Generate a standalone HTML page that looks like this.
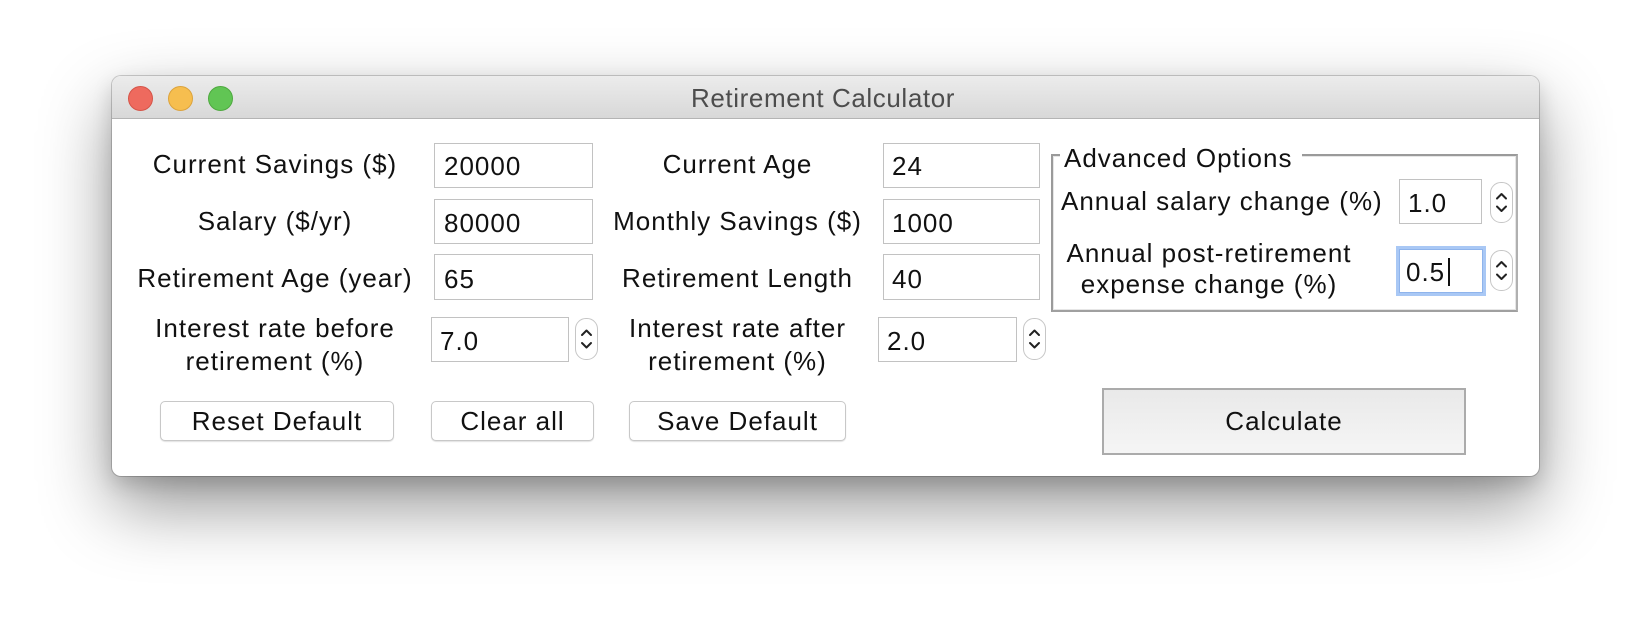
<!DOCTYPE html>
<html><head><meta charset="utf-8"><style>
*{margin:0;padding:0;box-sizing:border-box}
html,body{width:1650px;height:624px;overflow:hidden;background:#fff;font-family:"Liberation Sans",Arial,sans-serif}
.win{position:absolute;left:112px;top:76px;width:1427px;height:400px;background:#fff;border-radius:9px;box-shadow:0 0 0 1px rgba(0,0,0,0.18),0 30px 70px rgba(0,0,0,0.42),0 8px 20px rgba(0,0,0,0.15);overflow:hidden}
.tb{position:absolute;left:0;top:0;width:100%;height:43px;background:linear-gradient(#ececec,#d8d8d8);border-bottom:1px solid #b4b4b4}
.dot{position:absolute;top:10px;width:25px;height:25px;border-radius:50%}
.t{position:absolute;font-size:26px;line-height:23px;letter-spacing:1px;color:#111;white-space:nowrap}
.c{text-align:center}
.e{position:absolute;border:1px solid #c2c2c2;background:#fff}
.sp{position:absolute;width:23px;height:42px;border:1px solid #c6c6c6;border-radius:11px;background:#fff}
.btn{position:absolute;border:1px solid #c8c8c8;border-radius:5px;background:#fff;box-shadow:0 1px 1px rgba(0,0,0,0.12)}
</style></head><body>
<div class="win">
 <div class="tb">
  <div class="dot" style="left:16px;background:#ee6a5e;border:1px solid #d55448"></div>
  <div class="dot" style="left:56px;background:#f6be4f;border:1px solid #dca33c"></div>
  <div class="dot" style="left:96px;background:#61c554;border:1px solid #4ea93f"></div>
  <div class="t c" style="left:0;width:1422px;top:11px;color:#4d4d4d;letter-spacing:0.6px">Retirement Calculator</div>
 </div>
</div>
<div style="position:absolute;left:0;top:0;width:1650px;height:624px">
<div class="t c" style="left:125px;width:300px;top:153px">Current Savings ($)</div>
<div class="t c" style="left:125px;width:300px;top:210px">Salary ($/yr)</div>
<div class="t c" style="left:125px;width:300px;top:267px">Retirement Age (year)</div>
<div class="t c" style="left:125px;width:300px;top:317px">Interest rate before</div>
<div class="t c" style="left:125px;width:300px;top:350px">retirement (%)</div>
<div class="e" style="left:434px;top:143px;width:159px;height:45px"></div>
<div class="t" style="left:444px;top:155px">20000</div>
<div class="e" style="left:434px;top:199px;width:159px;height:45px"></div>
<div class="t" style="left:444px;top:212px">80000</div>
<div class="e" style="left:434px;top:254px;width:159px;height:46px"></div>
<div class="t" style="left:444px;top:268px">65</div>
<div class="e" style="left:431px;top:317px;width:138px;height:45px"></div>
<div class="t" style="left:440px;top:330px">7.0</div>
<div class="sp" style="left:575px;top:318px"><svg width="21" height="40" viewBox="0 0 21 40"><path d="M6 16 L10.5 11.5 L15 16 M6 24 L10.5 28.5 L15 24" fill="none" stroke="#222" stroke-width="2" stroke-linecap="round" stroke-linejoin="round"/></svg></div>
<div class="t c" style="left:600px;width:275px;top:153px">Current Age</div>
<div class="t c" style="left:600px;width:275px;top:210px">Monthly Savings ($)</div>
<div class="t c" style="left:600px;width:275px;top:267px">Retirement Length</div>
<div class="t c" style="left:600px;width:275px;top:317px">Interest rate after</div>
<div class="t c" style="left:600px;width:275px;top:350px">retirement (%)</div>
<div class="e" style="left:883px;top:143px;width:157px;height:45px"></div>
<div class="t" style="left:892px;top:155px">24</div>
<div class="e" style="left:883px;top:199px;width:157px;height:45px"></div>
<div class="t" style="left:892px;top:212px">1000</div>
<div class="e" style="left:883px;top:254px;width:157px;height:46px"></div>
<div class="t" style="left:892px;top:268px">40</div>
<div class="e" style="left:878px;top:317px;width:139px;height:45px"></div>
<div class="t" style="left:887px;top:330px">2.0</div>
<div class="sp" style="left:1023px;top:318px"><svg width="21" height="40" viewBox="0 0 21 40"><path d="M6 16 L10.5 11.5 L15 16 M6 24 L10.5 28.5 L15 24" fill="none" stroke="#222" stroke-width="2" stroke-linecap="round" stroke-linejoin="round"/></svg></div>
<div class="btn" style="left:160px;top:401px;width:234px;height:40px"></div>
<div class="t c" style="left:160px;width:234px;top:410px">Reset Default</div>
<div class="btn" style="left:431px;top:401px;width:163px;height:40px"></div>
<div class="t c" style="left:431px;width:163px;top:410px">Clear all</div>
<div class="btn" style="left:629px;top:401px;width:217px;height:40px"></div>
<div class="t c" style="left:629px;width:217px;top:410px">Save Default</div>
<div style="position:absolute;left:1102px;top:388px;width:364px;height:67px;border:2px solid #ababab;background:linear-gradient(#e9e9e9,#f5f5f5)"></div>
<div class="t c" style="left:1102px;width:364px;top:410px">Calculate</div>
<div style="position:absolute;left:1051px;top:154px;width:467px;height:158px;border:2px solid #9a9a9a;border-right-color:#b0b0b0;border-bottom-color:#a0a0a0"></div>
<div style="position:absolute;left:1053px;top:156px;width:463px;height:154px;border:1px solid #e6e6e6"></div>
<div style="position:absolute;left:1060px;top:148px;width:242px;height:16px;background:#fff"></div>
<div class="t" style="left:1064px;top:147px">Advanced Options</div>
<div class="t" style="left:1061px;top:190px">Annual salary change (%)</div>
<div class="t c" style="left:1040px;width:338px;top:242px">Annual post-retirement</div>
<div class="t c" style="left:1040px;width:338px;top:273px">expense change (%)</div>
<div class="e" style="left:1399px;top:179px;width:83px;height:45px"></div>
<div class="t" style="left:1408px;top:192px">1.0</div>
<div class="sp" style="left:1490px;top:182px;height:41px"><svg width="21" height="39" viewBox="0 0 21 39"><path d="M6 15.5 L10.5 11 L15 15.5 M6 23.5 L10.5 28 L15 23.5" fill="none" stroke="#222" stroke-width="2" stroke-linecap="round" stroke-linejoin="round"/></svg></div>
<div style="position:absolute;left:1396px;top:246px;width:90px;height:50px;border:3px solid #a9c8f5;background:#fff"></div>
<div style="position:absolute;left:1399px;top:249px;width:84px;height:44px;border:1px solid #8fb4ec"></div>
<div class="t" style="left:1406px;top:261px">0.5</div>
<div style="position:absolute;left:1448px;top:258px;width:2px;height:28px;background:#111"></div>
<div class="sp" style="left:1490px;top:250px;height:41px"><svg width="21" height="39" viewBox="0 0 21 39"><path d="M6 15.5 L10.5 11 L15 15.5 M6 23.5 L10.5 28 L15 23.5" fill="none" stroke="#222" stroke-width="2" stroke-linecap="round" stroke-linejoin="round"/></svg></div>
</div>
</body></html>
